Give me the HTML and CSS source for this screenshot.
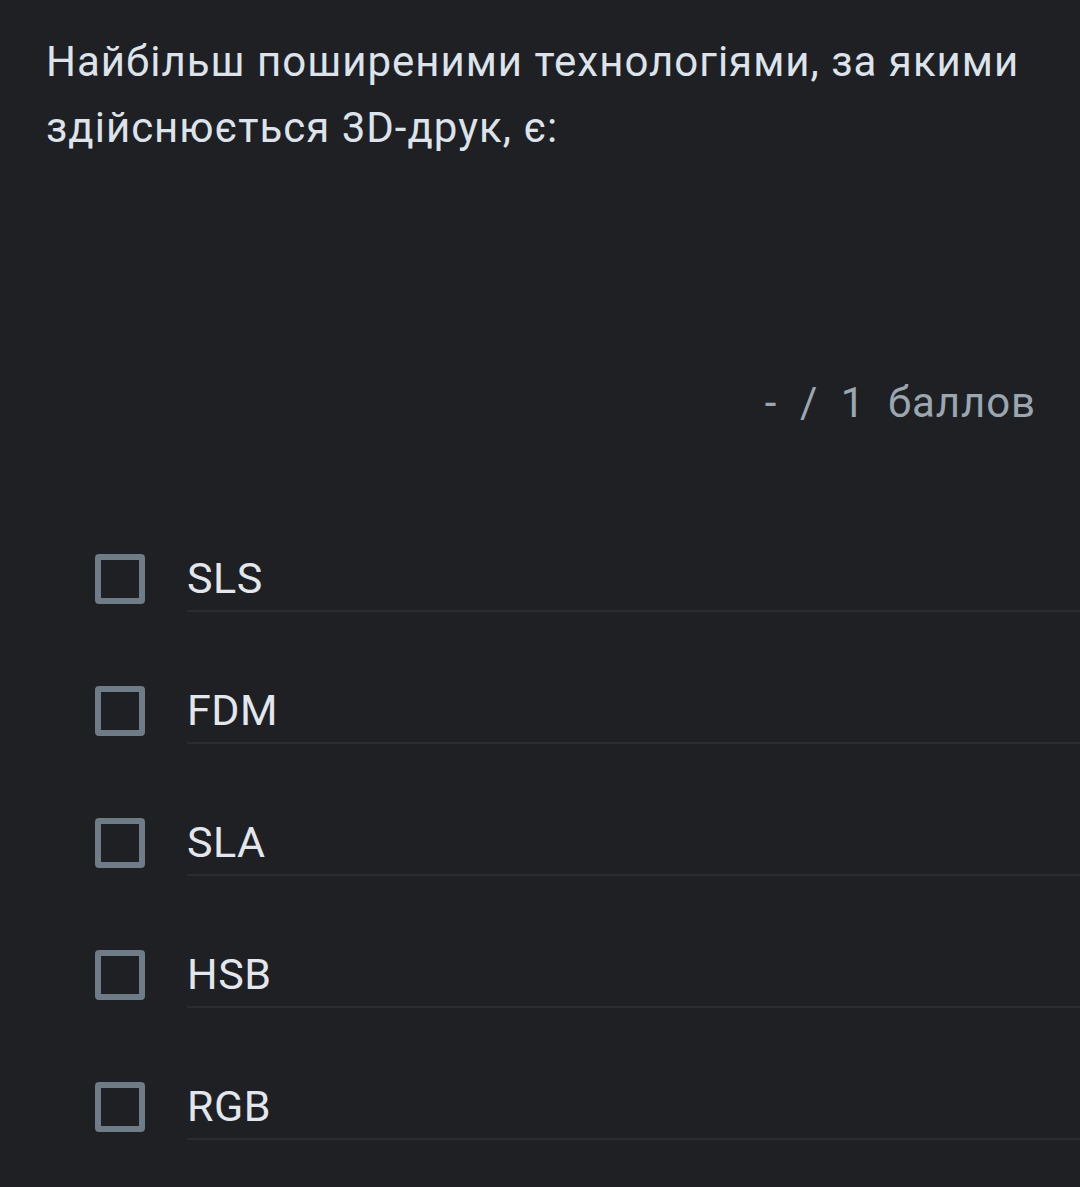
FILE: index.html
```html
<!DOCTYPE html>
<html lang="uk">
<head>
<meta charset="utf-8">
<link rel="stylesheet" href="styles.css">
</head>
<body>
<main class="question">
  <h1 class="title">Найбільш поширеними технологіями, за якими здійснюється 3D-друк, є:</h1>
  <div class="score">- &nbsp;/ &nbsp;1 &nbsp;баллов</div>
  <ul class="options">
    <li class="option"><span class="box"></span><span class="label">SLS</span></li>
    <li class="option"><span class="box"></span><span class="label">FDM</span></li>
    <li class="option"><span class="box"></span><span class="label">SLA</span></li>
    <li class="option"><span class="box"></span><span class="label">HSB</span></li>
    <li class="option"><span class="box"></span><span class="label">RGB</span></li>
  </ul>
</main>
</body>
</html>
```
FILE: styles.css
```css
html, body {
  margin: 0;
  padding: 0;
  background: #1f2023;
}
body {
  font-family: Roboto, "Noto Sans", sans-serif;
  height: 1187px;
  overflow: hidden;
}
.question {
  padding: 29px 0 0 46px;
}
.title {
  margin: 0;
  font-size: 42px;
  font-weight: 400;
  letter-spacing: 1px;
  line-height: 66px;
  color: #dce3ea;
  width: 1010px;
}
.score {
  margin: 217px 44px 0 0;
  text-align: right;
  font-size: 42px;
  letter-spacing: 0.9px;
  line-height: 50px;
  color: #9aa6b0;
}
.options {
  list-style: none;
  margin: 118px 0 0 0;
  padding: 0;
}
.option {
  display: flex;
  align-items: center;
  margin-bottom: 66px;
}
.box {
  flex: none;
  box-sizing: border-box;
  width: 50px;
  height: 50px;
  border: 6px solid #6e7c87;
  border-radius: 4px;
  margin: 0 42px 0 49px;
}
.label {
  flex: 1;
  height: 64px;
  display: flex;
  align-items: center;
  font-size: 43px;
  letter-spacing: 0.5px;
  color: #e1e7ec;
  border-bottom: 2px solid #2a2c30;
}
```
